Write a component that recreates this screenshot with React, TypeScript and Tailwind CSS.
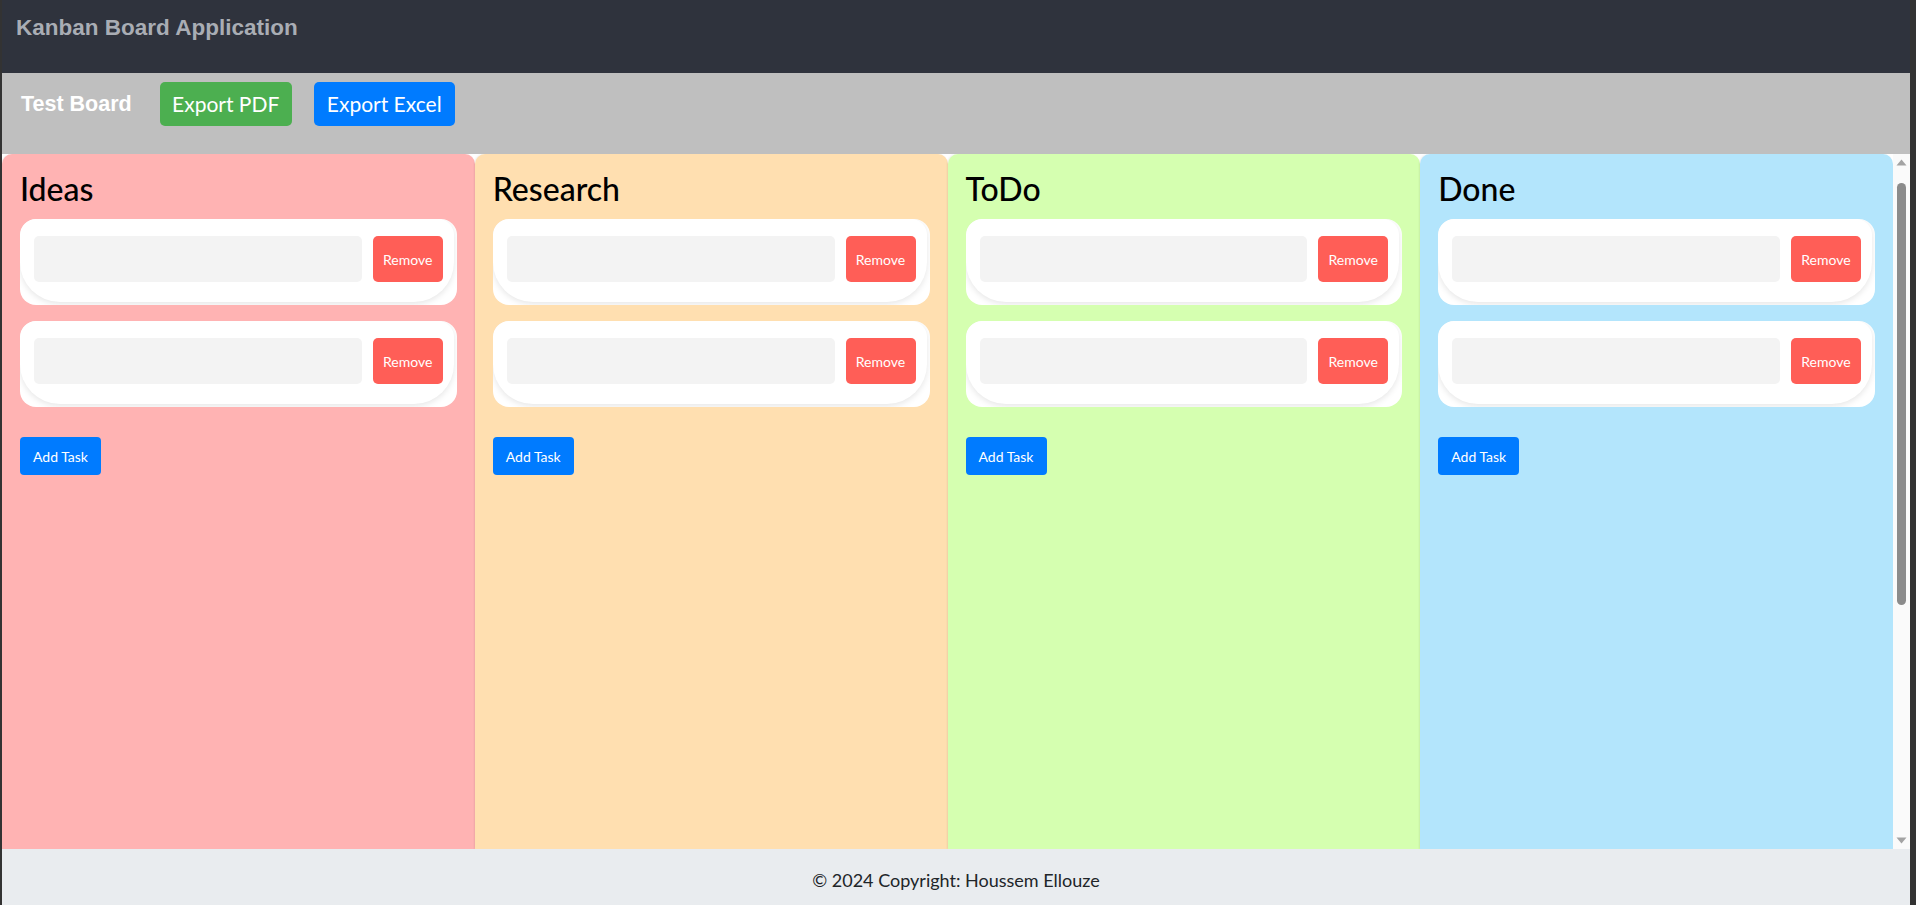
import React from "react";

type Column = { title: string; bg: string };

const columns: Column[] = [
  { title: "Ideas", bg: "bg-[#ffb3b3]" },
  { title: "Research", bg: "bg-[#ffdfb0]" },
  { title: "ToDo", bg: "bg-[#d5ffb0]" },
  { title: "Done", bg: "bg-[#b3e5fc]" },
];

function TaskCard() {
  return (
    <div className="rounded-[16px] bg-white overflow-hidden pr-[3px] pb-[3px] h-[86px]">
      <div className="h-full rounded-[16px_16px_40px_40px] bg-white shadow-[0_2px_6px_rgba(0,0,0,0.1)] flex items-start gap-[11px] pl-[14px] pr-[11px] pt-[17px]">
        <input
          className="flex-1 min-w-0 h-[46px] rounded-[5px] bg-[#f3f3f3] border-0 outline-none px-3 text-[14px]"
          defaultValue=""
        />
        <button className="w-[70px] h-[46px] shrink-0 rounded-[5px] bg-[#ff5e57] text-white text-[14px] flex items-center justify-center">
          Remove
        </button>
      </div>
    </div>
  );
}

function KanbanColumn({ col }: { col: Column }) {
  return (
    <div
      className={`flex-1 min-w-0 h-full rounded-t-[10px] ${col.bg} px-[18px] pt-[16px] shadow-[-1px_0_2px_rgba(0,0,0,0.07)]`}
    >
      <h2 className="text-[32px] leading-[1.2] font-medium text-black mb-[11px]">{col.title}</h2>
      <div className="flex flex-col gap-4">
        <TaskCard />
        <TaskCard />
      </div>
      <button className="mt-[30px] h-[38px] w-[81px] rounded-[4px] bg-[#007bff] text-white text-[14px] flex items-center justify-center">
        Add Task
      </button>
    </div>
  );
}

function Scrollbar() {
  return (
    <div className="w-[17px] shrink-0 h-full bg-[#fafafa] flex flex-col items-center">
      <div className="h-[17px] w-full flex items-center justify-center">
        <svg width="11" height="7" viewBox="0 0 11 7">
          <path d="M5.5 0.5 L10.5 6.5 L0.5 6.5 Z" fill="#a3a3a3" />
        </svg>
      </div>
      <div className="mt-[12px] h-[422px] w-[9px] rounded-full bg-[#8b8b8b]" />
      <div className="flex-1" />
      <div className="h-[17px] w-full flex items-center justify-center">
        <svg width="11" height="7" viewBox="0 0 11 7">
          <path d="M0.5 0.5 L10.5 0.5 L5.5 6.5 Z" fill="#a3a3a3" />
        </svg>
      </div>
    </div>
  );
}

export default function App() {
  return (
    <div className="h-[905px] w-full flex flex-col border-l-2 border-r-[6px] border-[#333333] bg-white overflow-hidden font-['Lato',sans-serif]">
      <header className="h-[73px] shrink-0 bg-[#2f333d] px-[14px] pt-[13px]">
        <h1 className="text-[22.5px] leading-[30px] font-bold text-[#a9adb4] font-['Liberation_Sans',Arial,sans-serif]">
          Kanban Board Application
        </h1>
      </header>
      <div className="h-[81px] shrink-0 bg-[#bfbfbf] flex items-start pt-[9px] pl-[19px]">
        <div className="h-[44px] flex items-center">
          <span className="text-[21.5px] font-bold text-white font-['Liberation_Sans',Arial,sans-serif]">Test Board</span>
          <button className="ml-[28px] w-[132px] h-[44px] rounded-[5px] bg-[#4caf50] text-white text-[21px] flex items-center justify-center">
            Export PDF
          </button>
          <button className="ml-[22px] w-[141px] h-[44px] rounded-[5px] bg-[#007bff] text-white text-[21px] flex items-center justify-center">
            Export Excel
          </button>
        </div>
      </div>
      <main className="flex-1 min-h-0 flex bg-white overflow-hidden">
        <div className="flex-1 min-w-0 flex h-full">
          {columns.map((c) => (
            <KanbanColumn key={c.title} col={c} />
          ))}
        </div>
        <Scrollbar />
      </main>
      <footer className="h-[56px] shrink-0 bg-[#e9ecef] flex items-center justify-center pt-[6px] text-[18px] text-[#212529]">
        © 2024 Copyright: Houssem Ellouze
      </footer>
    </div>
  );
}
